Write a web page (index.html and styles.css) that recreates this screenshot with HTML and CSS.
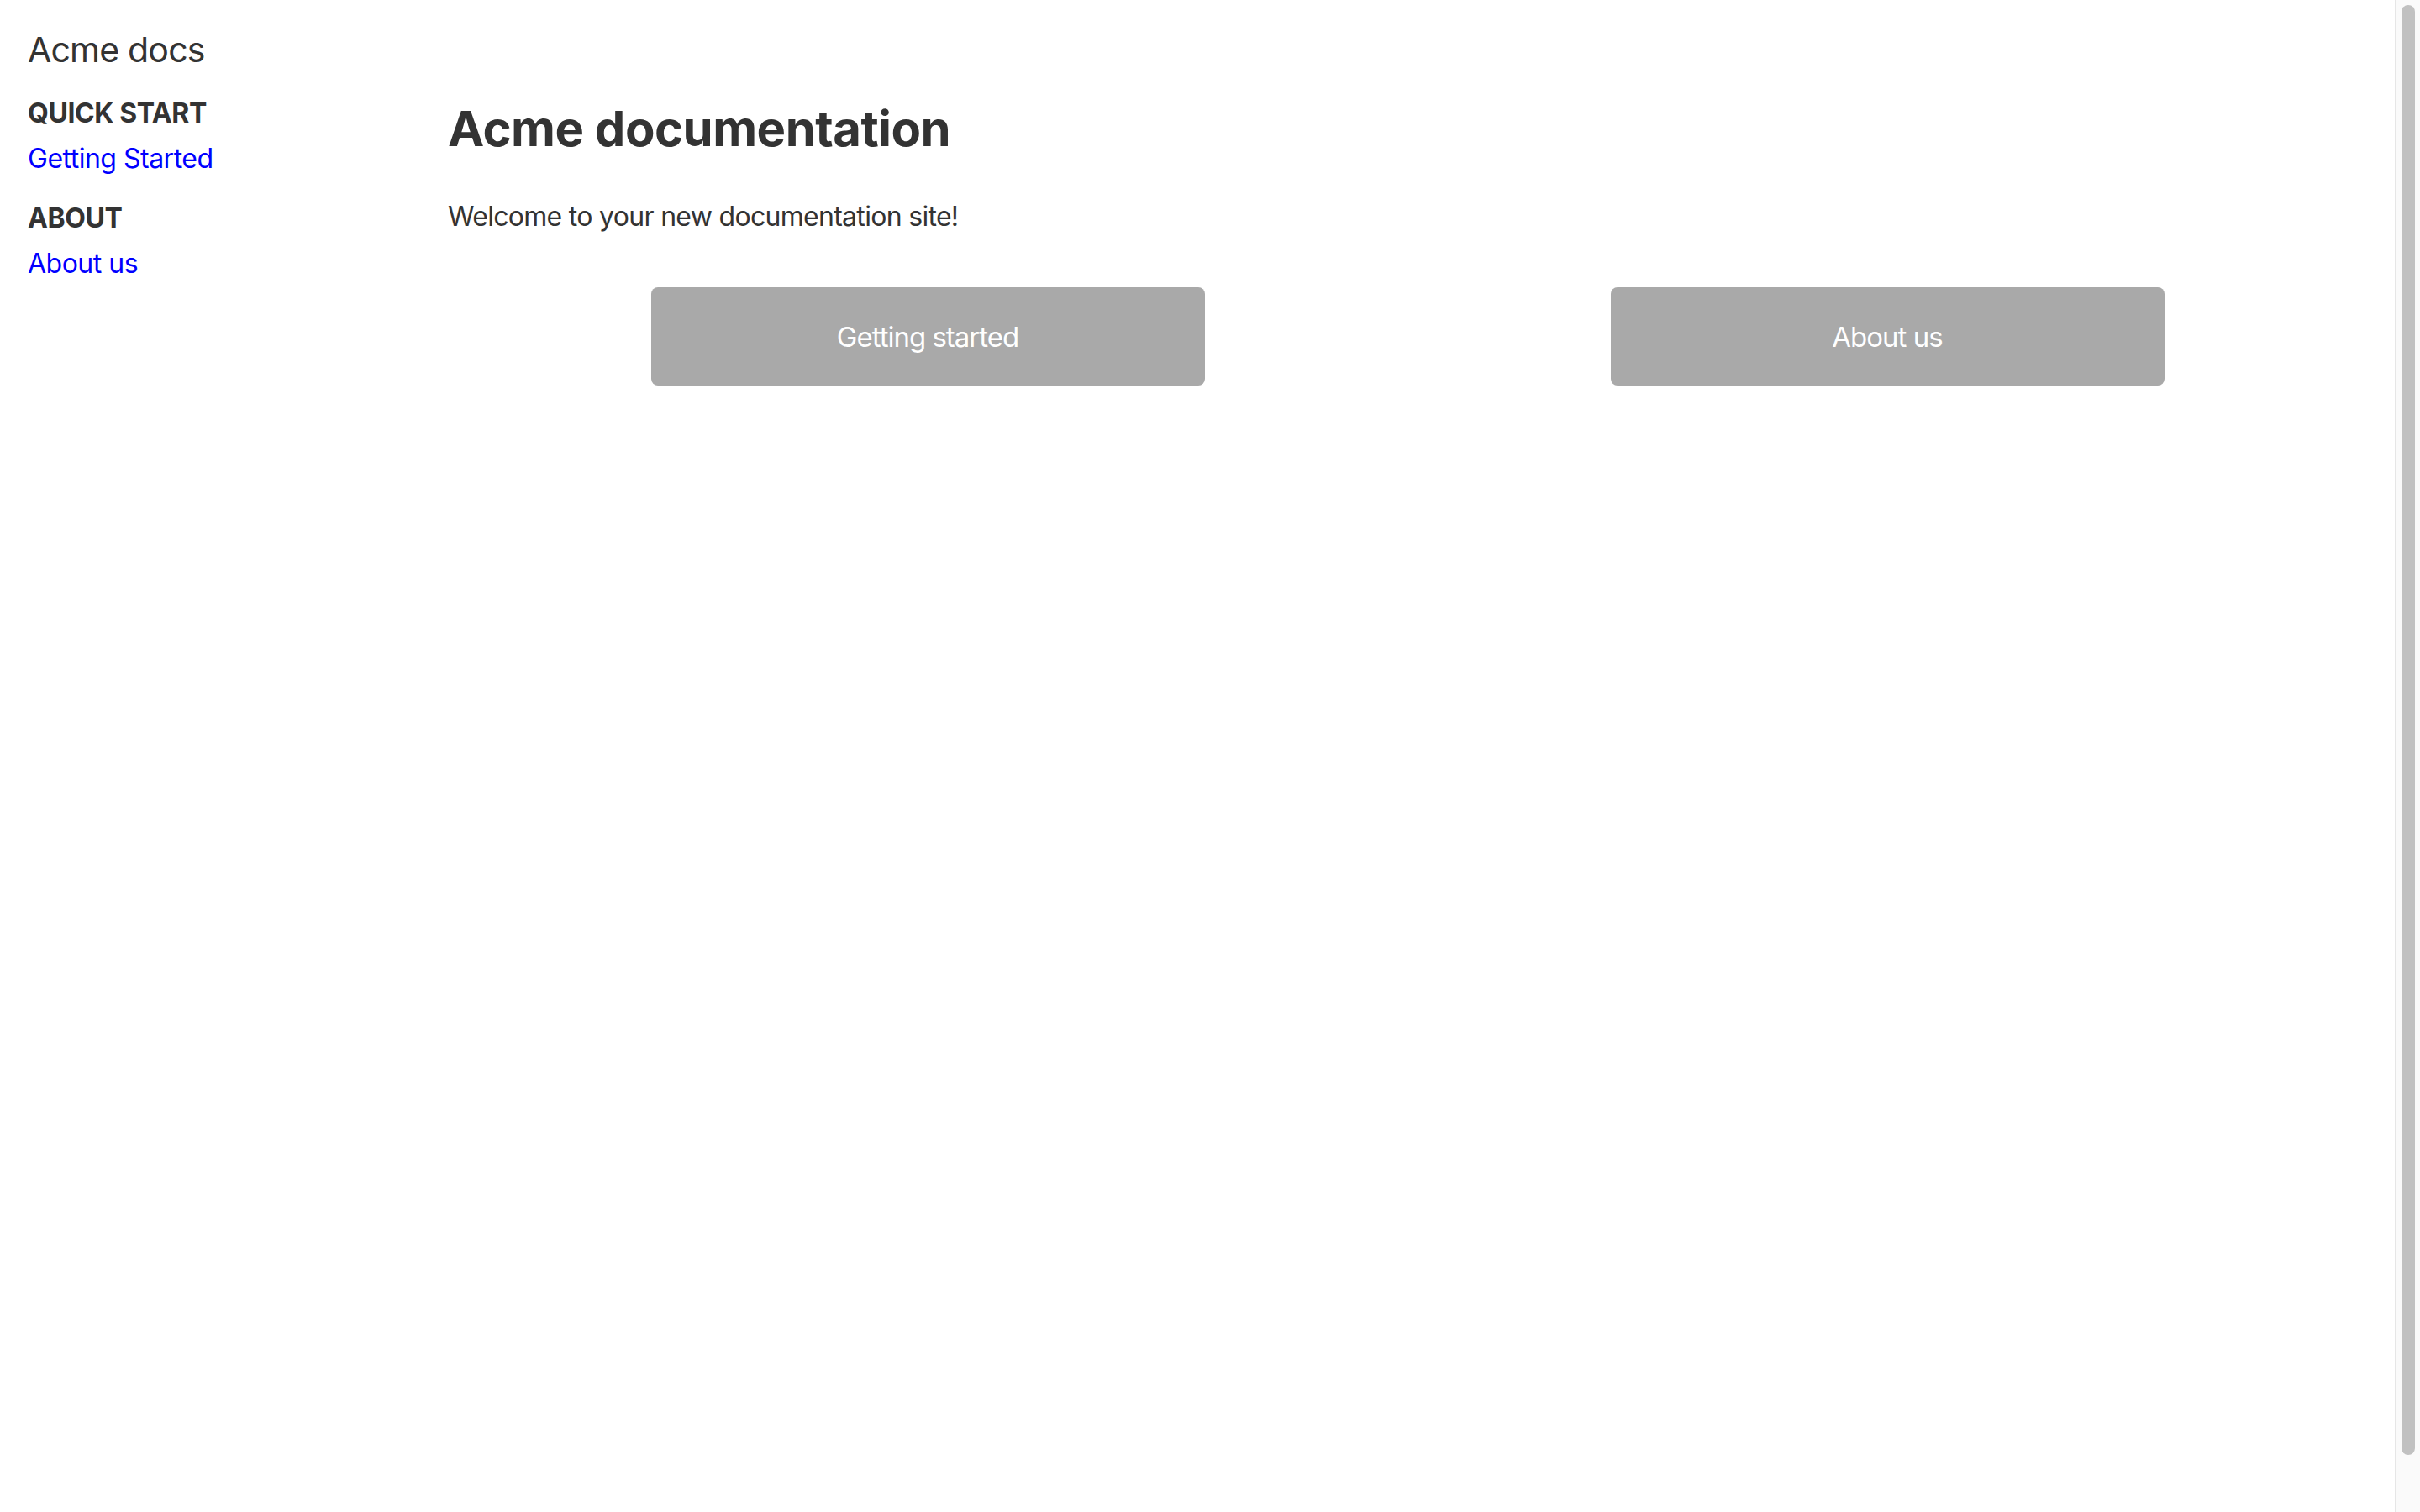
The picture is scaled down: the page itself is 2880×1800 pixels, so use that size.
FILE: index.html
```html
<!DOCTYPE html>
<html lang="en">
<head>
<meta charset="utf-8">
<title>Acme docs</title>
<link rel="stylesheet" href="styles.css">
</head>
<body>
<div class="page">
  <div class="layout">
    <nav class="sidebar">
      <div class="brand">Acme docs</div>
      <div class="section-title first">QUICK START</div>
      <a class="nav-link" href="#">Getting Started</a>
      <div class="section-title">ABOUT</div>
      <a class="nav-link" href="#">About us</a>
    </nav>
    <main class="content">
      <h1 class="title">Acme documentation</h1>
      <p class="lead">Welcome to your new documentation site!</p>
      <div class="cards">
        <div class="cell"><a class="btn" href="#">Getting started</a></div>
        <div class="cell"><a class="btn" href="#">About us</a></div>
      </div>
    </main>
  </div>
  <div class="scrollbar"><div class="thumb"></div></div>
</div>
</body>
</html>
```
FILE: styles.css
```css
html, body {
  margin: 0;
  padding: 0;
  height: 100%;
  background: #ffffff;
}
body {
  font-family: Inter, "Noto Sans", "Liberation Sans", sans-serif;
  color: #333333;
}
.page {
  display: flex;
  height: 1800px;
  overflow: hidden;
}
.layout {
  flex: 1;
  display: flex;
  min-width: 0;
}
.sidebar {
  flex: 0 0 500px;
  padding: 35px 0 0 33px;
  display: flex;
  flex-direction: column;
  align-items: flex-start;
}
.brand {
  font-size: 41px;
  line-height: 48px;
  font-weight: 400;
  color: #333333;
  letter-spacing: -0.8px;
}
.section-title {
  font-size: 32px;
  line-height: 40px;
  font-weight: 700;
  color: #333333;
  letter-spacing: -0.4px;
  margin-top: 31px;
}
.section-title.first {
  margin-top: 32px;
}
.nav-link {
  font-size: 32px;
  line-height: 40px;
  color: #0000ff;
  text-decoration: none;
  letter-spacing: -0.5px;
  margin-top: 14px;
}
.content {
  flex: 1;
  min-width: 0;
  padding: 118px 33px 0 0;
}
.title {
  margin: 0;
  font-size: 58px;
  line-height: 70px;
  font-weight: 700;
  color: #333333;
  letter-spacing: -0.5px;
}
.lead {
  margin: 50px 0 0 0;
  font-size: 32px;
  line-height: 40px;
  color: #333333;
  letter-spacing: -0.7px;
}
.cards {
  margin-top: 64px;
  display: grid;
  grid-template-columns: 1fr 1fr;
}
.cell {
  display: flex;
  justify-content: center;
}
.btn {
  width: 659px;
  height: 117px;
  display: flex;
  align-items: center;
  justify-content: center;
  background: #a9a9a9;
  border-radius: 8px;
  color: #ffffff;
  font-size: 33px;
  letter-spacing: -1px;
  text-decoration: none;
}
.scrollbar {
  flex: 0 0 30px;
  height: 1800px;
  background: #fafafa;
  border-left: 2px solid #e6e6e6;
  padding: 6px 0 0 6px;
  box-sizing: border-box;
}
.thumb {
  width: 16px;
  height: 1726px;
  border-radius: 8px;
  background: #c1c1c1;
}
```
